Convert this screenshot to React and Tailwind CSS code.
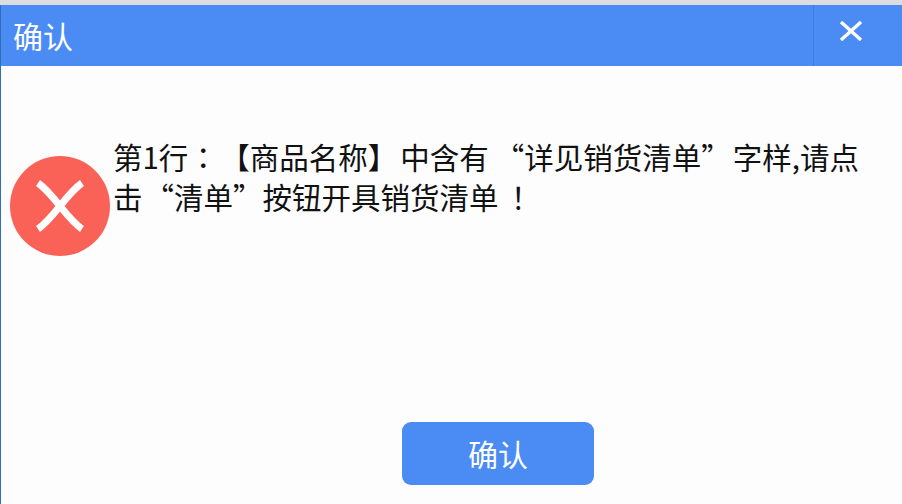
import React from 'react';

const cjk = 'font-["Noto_Sans_CJK_SC","Liberation_Sans",sans-serif]';
const tc = 'font-["Noto_Sans_CJK_TC",sans-serif]';

export default function App() {
    return (
        <div className={`w-[902px] h-[504px] overflow-hidden flex flex-col bg-[#fdfdfe] ${cjk}`}>
            <div className="h-[5px] bg-[#dcdde0]"></div>
            <div className="h-[61px] flex items-stretch bg-[#4b8bf4] border-l border-[#2f6db5]">
                <div className="flex-1 flex items-center pl-3 text-white text-[30px]">确认</div>
                <div className="w-[89px] flex items-center justify-center border-l border-[#3d7ae0]">
                    <svg width="24" height="20" viewBox="0 0 24 20" className="mr-[14px] -mt-[9px]">
                        <path d="M2 1 L22 19 M22 1 L2 19" stroke="#fff" strokeWidth="3.4" />
                    </svg>
                </div>
            </div>
            <div className="flex-1 flex flex-col border-l border-[#2f6db5]">
                <div className="flex-1 flex items-start pl-[9px] pt-[70px]">
                    <div className="w-[100px] h-[100px] shrink-0 mt-[20px] rounded-full bg-[#fa6257] flex items-center justify-center">
                        <svg width="52" height="52" viewBox="0 0 52 52">
                            <path d="M4 3 C20 14 32 38 48 49 M48 3 C32 14 20 38 4 49" stroke="#fff" strokeWidth="7" fill="none" />
                        </svg>
                    </div>
                    <p className="ml-[3px] text-[#111] text-[29.5px] leading-[40px] whitespace-nowrap">
                        第1行<span className={`${tc} mr-[17px]`}>：</span>【商品名称】<span className="ml-[3px]">中含有</span><span className="ml-[6px]">“</span>详见销货清单”<span className="ml-[2px]">字样</span>,请点
                        <br />
                        击<span className="ml-[2px]">“</span>清单”按钮开具销货清单<span className={`${tc} ml-[5px]`}>！</span>
                    </p>
                </div>
                <div className="flex justify-end pb-[19px] pr-[308px]">
                    <button className="w-[192px] h-[63px] rounded-[9px] bg-[#4b8bf4] text-white text-[30px]">确认</button>
                </div>
            </div>
        </div>
    );
}
